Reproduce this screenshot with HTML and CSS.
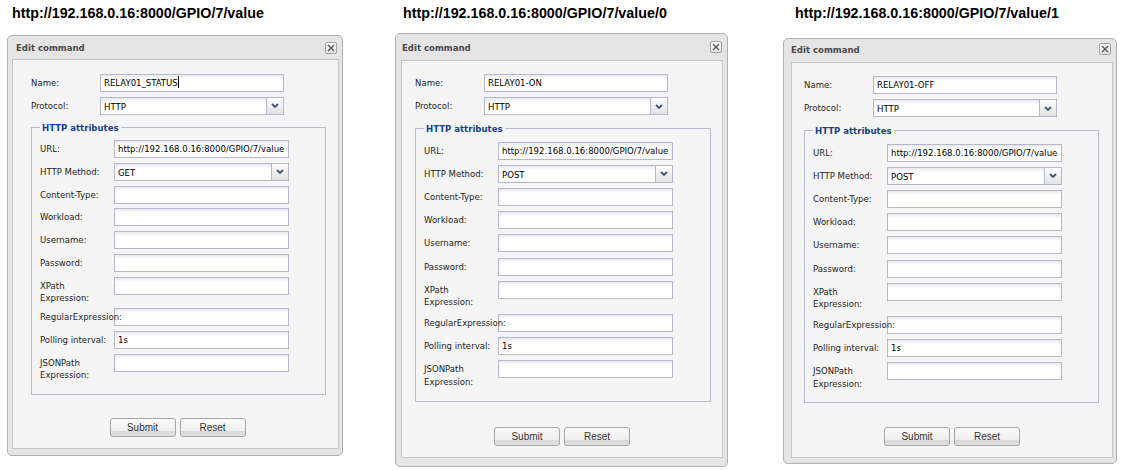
FILE: index.html
```html
<!DOCTYPE html>
<html>
<head>
<meta charset="utf-8">
<title>Edit command</title>
<link rel="stylesheet" href="styles.css">
</head>
<body>
<main class="page">

  <section class="col c1">
    <h2 class="url">http://192.168.0.16:8000/GPIO/7/value</h2>
    <div class="dialog">
      <div class="titlebar">
        <span class="title">Edit command</span>
        <span class="close"><svg width="8" height="8" viewBox="0 0 8 8"><path d="M1 1L7 7M7 1L1 7" stroke="#555" stroke-width="1.4" fill="none"/></svg></span>
      </div>
      <div class="dbody">
        <div class="form">
          <div class="row"><label class="lbl">Name:</label><div class="input wide">RELAY01_STATUS<span class="caret"></span></div></div>
          <div class="row"><label class="lbl">Protocol:</label><div class="select wide"><span class="sv">HTTP</span><span class="trigger"><svg width="8" height="5" viewBox="0 0 8 5"><path d="M1 1L4 4L7 1" stroke="#41557a" stroke-width="1.8" fill="none"/></svg></span></div></div>
          <fieldset class="fs">
            <legend>HTTP attributes</legend>
            <div class="row"><label class="lbl fl">URL:</label><div class="input">http://192.168.0.16:8000/GPIO/7/value</div></div>
            <div class="row"><label class="lbl fl">HTTP Method:</label><div class="select"><span class="sv">GET</span><span class="trigger"><svg width="8" height="5" viewBox="0 0 8 5"><path d="M1 1L4 4L7 1" stroke="#41557a" stroke-width="1.8" fill="none"/></svg></span></div></div>
            <div class="row"><label class="lbl fl">Content-Type:</label><div class="input"></div></div>
            <div class="row"><label class="lbl fl">Workload:</label><div class="input"></div></div>
            <div class="row"><label class="lbl fl">Username:</label><div class="input"></div></div>
            <div class="row"><label class="lbl fl">Password:</label><div class="input"></div></div>
            <div class="row"><label class="lbl fl two">XPath<br>Expression:</label><div class="input"></div></div>
            <div class="row"><label class="lbl fl">RegularExpression:</label><div class="input"></div></div>
            <div class="row"><label class="lbl fl">Polling interval:</label><div class="input">1s</div></div>
            <div class="row"><label class="lbl fl two">JSONPath<br>Expression:</label><div class="input"></div></div>
          </fieldset>
        </div>
        <div class="footer"><button class="btn">Submit</button><button class="btn">Reset</button></div>
      </div>
    </div>
  </section>

  <section class="col c2">
    <h2 class="url">http://192.168.0.16:8000/GPIO/7/value/0</h2>
    <div class="dialog">
      <div class="titlebar">
        <span class="title">Edit command</span>
        <span class="close"><svg width="8" height="8" viewBox="0 0 8 8"><path d="M1 1L7 7M7 1L1 7" stroke="#555" stroke-width="1.4" fill="none"/></svg></span>
      </div>
      <div class="dbody">
        <div class="form">
          <div class="row"><label class="lbl">Name:</label><div class="input wide">RELAY01-ON</div></div>
          <div class="row"><label class="lbl">Protocol:</label><div class="select wide"><span class="sv">HTTP</span><span class="trigger"><svg width="8" height="5" viewBox="0 0 8 5"><path d="M1 1L4 4L7 1" stroke="#41557a" stroke-width="1.8" fill="none"/></svg></span></div></div>
          <fieldset class="fs">
            <legend>HTTP attributes</legend>
            <div class="row"><label class="lbl fl">URL:</label><div class="input">http://192.168.0.16:8000/GPIO/7/value</div></div>
            <div class="row"><label class="lbl fl">HTTP Method:</label><div class="select"><span class="sv">POST</span><span class="trigger"><svg width="8" height="5" viewBox="0 0 8 5"><path d="M1 1L4 4L7 1" stroke="#41557a" stroke-width="1.8" fill="none"/></svg></span></div></div>
            <div class="row"><label class="lbl fl">Content-Type:</label><div class="input"></div></div>
            <div class="row"><label class="lbl fl">Workload:</label><div class="input"></div></div>
            <div class="row"><label class="lbl fl">Username:</label><div class="input"></div></div>
            <div class="row"><label class="lbl fl">Password:</label><div class="input"></div></div>
            <div class="row"><label class="lbl fl two">XPath<br>Expression:</label><div class="input"></div></div>
            <div class="row"><label class="lbl fl">RegularExpression:</label><div class="input"></div></div>
            <div class="row"><label class="lbl fl">Polling interval:</label><div class="input">1s</div></div>
            <div class="row"><label class="lbl fl two">JSONPath<br>Expression:</label><div class="input"></div></div>
          </fieldset>
        </div>
        <div class="footer"><button class="btn">Submit</button><button class="btn">Reset</button></div>
      </div>
    </div>
  </section>

  <section class="col c3">
    <h2 class="url">http://192.168.0.16:8000/GPIO/7/value/1</h2>
    <div class="dialog">
      <div class="titlebar">
        <span class="title">Edit command</span>
        <span class="close"><svg width="8" height="8" viewBox="0 0 8 8"><path d="M1 1L7 7M7 1L1 7" stroke="#555" stroke-width="1.4" fill="none"/></svg></span>
      </div>
      <div class="dbody">
        <div class="form">
          <div class="row"><label class="lbl">Name:</label><div class="input wide">RELAY01-OFF</div></div>
          <div class="row"><label class="lbl">Protocol:</label><div class="select wide"><span class="sv">HTTP</span><span class="trigger"><svg width="8" height="5" viewBox="0 0 8 5"><path d="M1 1L4 4L7 1" stroke="#41557a" stroke-width="1.8" fill="none"/></svg></span></div></div>
          <fieldset class="fs">
            <legend>HTTP attributes</legend>
            <div class="row"><label class="lbl fl">URL:</label><div class="input">http://192.168.0.16:8000/GPIO/7/value</div></div>
            <div class="row"><label class="lbl fl">HTTP Method:</label><div class="select"><span class="sv">POST</span><span class="trigger"><svg width="8" height="5" viewBox="0 0 8 5"><path d="M1 1L4 4L7 1" stroke="#41557a" stroke-width="1.8" fill="none"/></svg></span></div></div>
            <div class="row"><label class="lbl fl">Content-Type:</label><div class="input"></div></div>
            <div class="row"><label class="lbl fl">Workload:</label><div class="input"></div></div>
            <div class="row"><label class="lbl fl">Username:</label><div class="input"></div></div>
            <div class="row"><label class="lbl fl">Password:</label><div class="input"></div></div>
            <div class="row"><label class="lbl fl two">XPath<br>Expression:</label><div class="input"></div></div>
            <div class="row"><label class="lbl fl">RegularExpression:</label><div class="input"></div></div>
            <div class="row"><label class="lbl fl">Polling interval:</label><div class="input">1s</div></div>
            <div class="row"><label class="lbl fl two">JSONPath<br>Expression:</label><div class="input"></div></div>
          </fieldset>
        </div>
        <div class="footer"><button class="btn">Submit</button><button class="btn">Reset</button></div>
      </div>
    </div>
  </section>

</main>
</body>
</html>
```

FILE: styles.css
```css
* { box-sizing: border-box; }

body {
  margin: 0;
  background: #fff;
  font-family: "DejaVu Sans Condensed", "DejaVu Sans", sans-serif;
  font-stretch: condensed;
  font-size: 9.5px;
  color: #222;
}

.page {
  display: flex;
  align-items: flex-start;
}

.col { flex: none; }

.c1 {
  margin-left: 7px; width: 336px;
  --hx: 5px; --dtop: 13px;
  --pl: 4px; --pr: 3px; --pb: 6px;
  --th: 23px; --tpl: 4px; --tcr: 2px; --tpb: 0px;
  --fpt: 14px; --fpl: 18px;
  --gap: 4.75px; --fsm: 6.25px; --fspt: 6px; --fspb: 13px; --lh2: 12px;
  --fsw: 295px; --fm: 23px; --fsh: 4px; --fpb: 11px;
}
.c2 {
  margin-left: 52px; width: 333px;
  --hx: 8px; --dtop: 11px;
  --pl: 5px; --pr: 4px; --pb: 8px;
  --th: 26px; --tpl: 1px; --tcr: 1px; --tpb: 0px;
  --fpt: 13px; --fpl: 13px;
  --gap: 5.2px; --fsm: 6.5px; --fspt: 7px; --fspb: 13px; --lh2: 12.5px;
  --fsw: 296px; --fm: 25px; --fsh: 0px; --fpb: 11px;
}
.c3 {
  margin-left: 55px; width: 334px;
  --hx: 12px; --dtop: 16px;
  --pl: 7px; --pr: 3px; --pb: 5px;
  --th: 23px; --tpl: 0px; --tcr: 2px; --tpb: 3px;
  --fpt: 13px; --fpl: 12px;
  --gap: 5.2px; --fsm: 6.5px; --fspt: 7px; --fspb: 12px; --lh2: 12.5px;
  --fsw: 295px; --fm: 24px; --fsh: 0px; --fpb: 11px;
}

.url {
  margin: 5px 0 0;
  padding-left: var(--hx);
  font: bold 14.3px/17px "Liberation Sans", Arial, sans-serif;
  font-stretch: normal;
  color: #000;
  white-space: nowrap;
}

.dialog {
  margin-top: var(--dtop);
  border: 1px solid #b0b0b0;
  border-radius: 5px;
  background: #e5e5e5;
  padding: 0 var(--pr) var(--pb) var(--pl);
}

.titlebar {
  height: var(--th);
  display: flex;
  align-items: center;
  justify-content: space-between;
  padding-left: var(--tpl);
  padding-right: var(--tcr);
  padding-bottom: var(--tpb);
}

.title {
  font-weight: bold;
  color: #4a4a4a;
}

.close {
  width: 12px;
  height: 12px;
  border: 1px solid #a2a2a2;
  border-radius: 2px;
  background: linear-gradient(#fbfbfb, #e4e4e4);
  display: flex;
  align-items: center;
  justify-content: center;
}

.dbody {
  border: 1px solid #c6c6c6;
  background: #f5f5f5;
}

.form {
  padding: var(--fpt) 0 0 var(--fpl);
}

.row {
  display: flex;
  align-items: flex-start;
}
.row + .row { margin-top: var(--gap); }

.lbl {
  flex: none;
  width: 69px;
  padding-top: 3px;
  line-height: 12px;
  white-space: nowrap;
  position: relative;
  z-index: 1;
  color: #1e1e1e;
}
.lbl.fl { width: 74px; }
.lbl.two { line-height: var(--lh2); }

.input, .select {
  flex: none;
  width: 175px;
  height: 18px;
  border: 1px solid #b5b8c8;
  background: #fff linear-gradient(#e9e9e9, #fff 4px);
  color: #000;
  line-height: 16px;
  padding-left: 3px;
  white-space: nowrap;
  overflow: hidden;
}
.wide { width: 184px; }

.caret {
  display: inline-block;
  width: 1px;
  height: 12px;
  background: #000;
  vertical-align: -2px;
}

.select {
  display: flex;
  padding-left: 0;
}
.sv {
  flex: 1;
  padding-left: 3px;
  padding-top: 1px;
}
.trigger {
  flex: none;
  width: 17px;
  height: 16px;
  border-left: 1px solid #b5b8c8;
  background: linear-gradient(#fdfdfd, #e3e3e3);
  display: flex;
  align-items: center;
  justify-content: center;
}

.fs {
  width: var(--fsw);
  margin: var(--fsm) 0 0;
  border: 1px solid #b8bccb;
  padding: var(--fspt) 0 var(--fspb) 8px;
}
.fs legend {
  padding: 0 2px;
  font-weight: bold;
  line-height: 13px;
  color: #15428b;
}

.footer {
  display: flex;
  justify-content: center;
  gap: 4px;
  margin-top: var(--fm);
  padding-left: var(--fsh);
  padding-bottom: var(--fpb);
}

.btn {
  width: 66px;
  height: 19px;
  padding: 0;
  border: 1px solid #a8a8a8;
  border-radius: 3px;
  background: linear-gradient(#fafafa 0%, #efefef 68%, #d8d8d8 70%, #e0e0e0 100%);
  font: 10px/17px "Liberation Sans", Arial, sans-serif;
  color: #333;
}
```
